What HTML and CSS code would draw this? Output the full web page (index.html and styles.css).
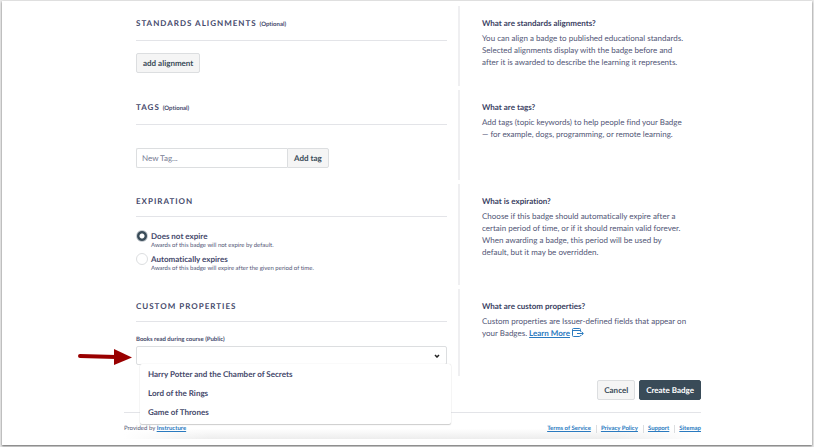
FILE: index.html
```
<!DOCTYPE html>
<html lang="en">
<head>
    <meta charset="UTF-8">
    <meta name="viewport" content="width=device-width, initial-scale=1.0">
    <title>Create Badge</title>
    <link rel="stylesheet" href="styles.css">
</head>
<body>
    <div class="window">
        <form class="page">
            <section class="row">
                <div class="fields">
                    <h2>Standards Alignments <small>(Optional)</small></h2>
                    <button type="button" class="btn">add alignment</button>
                </div>
                <aside class="help">
                    <h3>What are standards alignments?</h3>
                    <p>You can align a badge to published educational standards. Selected alignments display with the badge before and after it is awarded to describe the learning it represents.</p>
                </aside>
            </section>
            <section class="row row-tags">
                <div class="fields">
                    <h2>Tags <small>(Optional)</small></h2>
                    <div class="taginput">
                        <input type="text" placeholder="New Tag..." aria-label="New Tag">
                        <button type="button" class="btn">Add tag</button>
                    </div>
                </div>
                <aside class="help">
                    <h3>What are tags?</h3>
                    <p>Add tags (topic keywords) to help people find your Badge —&nbsp;for example, dogs, programming, or remote learning.</p>
                </aside>
            </section>
            <section class="row row-expiration">
                <div class="fields">
                    <h2>Expiration</h2>
                    <label class="radio">
                        <input type="radio" name="expires" checked>
                        <span class="radio-title">Does not expire</span>
                        <span class="radio-note">Awards of this badge will not expire by default.</span>
                    </label>
                    <label class="radio">
                        <input type="radio" name="expires">
                        <span class="radio-title">Automatically expires</span>
                        <span class="radio-note">Awards of this badge will expire after the given period of time.</span>
                    </label>
                </div>
                <aside class="help">
                    <h3>What is expiration?</h3>
                    <p>Choose if this badge should automatically expire after a certain period of time, or if it should remain valid forever. When awarding a badge, this period will be used by default, but it may be overridden.</p>
                </aside>
            </section>
            <section class="row row-custom">
                <div class="fields">
                    <h2>Custom Properties</h2>
                    <label class="field-label" for="books">Books read during course (Public)</label>
                    <div class="picker">
                        <select id="books">
                            <option></option>
                        </select>
                        <svg class="chevron" viewBox="0 0 6 4" aria-hidden="true"><path d="M1 1l2 2 2-2"/></svg>
                        <ul class="menu">
                            <li>Harry Potter and the Chamber of Secrets</li>
                            <li>Lord of the Rings</li>
                            <li>Game of Thrones</li>
                        </ul>
                        <svg class="pointer" viewBox="0 0 54 18" aria-hidden="true">
                            <path class="shaft" d="M2 8L38 9"/>
                            <path class="head" d="M36 1L54 9.500L36 17z"/>
                        </svg>
                    </div>
                </div>
                <aside class="help">
                    <h3>What are custom properties?</h3>
                    <p>Custom properties are Issuer-defined fields that appear on your Badges. <a href="#">Learn More</a>
                        <svg class="external" viewBox="0 0 12 10" aria-hidden="true">
                            <path d="M8.500 3.700V1.500Q8.500 .5 7.500 .5H1.500Q.5 .5 .5 1.500V7.500Q.5 8.500 1.500 8.500H7.500Q8.500 8.500 8.500 7.200M.5 2.500H8.500M5 5.500H11M9.500 3.700L11.400 5.500L9.500 7.300"/>
                        </svg>
                    </p>
                </aside>
            </section>
            <div class="actions">
                <button type="button" class="btn">Cancel</button>
                <button type="submit" class="btn btn-dark">Create Badge</button>
            </div>
        </form>
        <footer class="footer">
            <span>Provided by <a href="#">Instructure</a></span>
            <nav>
                <a href="#">Terms of Service</a>
                <a href="#">Privacy Policy</a>
                <a href="#">Support</a>
                <a href="#">Sitemap</a>
            </nav>
        </footer>
    </div>
</body>
</html>
```

FILE: styles.css
```
*{
    padding:0;
    margin:0;
    box-sizing:border-box;
}
body{
    background-color:#e9e9e9;
    color:#525676;
    font-family:Lato, sans-serif;
    font-size:8px;
    line-height:12px;
    text-rendering:geometricPrecision;
    font-variant-ligatures:none;
    padding:1px 2px 3px;
}
.window{
    background-color:white;
    box-shadow:0 1px 2px #666;
    padding:5px 111px 6px 122px;
}
a{
    color:#2a7abf;
    font-weight:bold;
}
button, input, select{
    font:inherit;
    font-variant-ligatures:none;
    text-rendering:inherit;
    color:inherit;
}
.row{
    display:grid;
    grid-template-columns:336fr 241fr;
    min-height:80px;
    margin-bottom:4px;
}
.row-tags{
    min-height:90px;
}
.row-expiration{
    min-height:101px;
}
.row-custom{
    min-height:87px;
}
.fields{
    border-right:2px solid #efeff1;
    padding:11px 11px 0 12px;
}
.help{
    padding:11px 14px 0 22px;
}
h2{
    font-size:8px;
    line-height:12px;
    letter-spacing:1px;
    text-transform:uppercase;
    color:#45496b;
    border-bottom:1px solid #e3e4e8;
    padding-bottom:9px;
    margin-bottom:12px;
}
h2 small{
    font-size:6px;
    letter-spacing:0;
    text-transform:none;
}
h3{
    font-size:8px;
    line-height:12px;
    color:#3b3f63;
    margin-bottom:3px;
}
.btn{
    height:20px;
    padding:0 6px;
    border:1px solid #dcdee0;
    border-radius:2px;
    background-color:#f5f5f5;
    color:#394b58;
    font-weight:bold;
}
.btn-dark{
    background-color:#394b58;
    border-color:#394b58;
    color:white;
}
.taginput{
    display:flex;
    width:62%;
    margin-top:23px;
}
.taginput input{
    flex:1;
    min-width:0;
    border:1px solid #dcdee0;
    border-right:0;
    border-radius:2px 0 0 2px;
    padding:0 5px;
}
.taginput input::placeholder{
    color:#777b93;
}
.taginput .btn{
    border-radius:0 2px 2px 0;
}
.radio{
    display:grid;
    grid-template-columns:12px 1fr;
    column-gap:3px;
    padding-top:1px;
    margin-bottom:2px;
}
.radio input{
    appearance:none;
    width:12px;
    height:12px;
    border:1px solid #dcdee0;
    border-radius:50%;
}
.radio input:checked{
    border-color:#c9ced3;
    background:radial-gradient(circle, white 2px, #394b58 3px);
}
.radio-title{
    font-weight:bold;
    color:#45496b;
}
.radio-note{
    grid-column:2;
    font-size:6px;
    line-height:8px;
}
.field-label{
    display:block;
    font-size:6px;
    line-height:8px;
    font-weight:bold;
    margin:14px 0 2px;
    color:#45496b;
}
.picker{
    position:relative;
}
.picker select{
    appearance:none;
    display:block;
    width:100%;
    height:19px;
    border:1px solid #dcdee0;
    border-radius:2px;
    background-color:white;
}
.chevron{
    position:absolute;
    right:7px;
    top:8px;
    width:6px;
    height:4px;
    fill:none;
    stroke:#222;
    stroke-width:1.5;
}
.menu{
    position:absolute;
    top:18px;
    left:4px;
    right:-4px;
    background-color:white;
    list-style:none;
    border-radius:2px;
    box-shadow:0 1px 1px #ccc, 0 0 1px #ccc;
    padding:1px 8px 2px;
    font-weight:bold;
    color:#45496b;
}
.menu li{
    line-height:19px;
}
.pointer{
    position:absolute;
    left:-58px;
    top:2px;
    width:54px;
    height:18px;
}
.shaft{
    stroke:#990000;
    stroke-width:4;
    stroke-linecap:round;
}
.head{
    fill:#990000;
}
.external{
    width:12px;
    height:10px;
    vertical-align:-2px;
    fill:none;
    stroke:#2a7abf;
    stroke-width:1;
}
.actions{
    display:flex;
    justify-content:flex-end;
    gap:4px;
}
.footer{
    display:flex;
    justify-content:space-between;
    border-top:1px solid #e3e4e8;
    margin-top:12px;
    padding:12px 0 6px;
    font-size:6px;
    line-height:8px;
    background:linear-gradient(to right, white, transparent 15%, transparent 85%, white), linear-gradient(white 60%, #ededed);
}
.footer nav{
    display:flex;
}
.footer nav a + a{
    border-left:1px solid #dcdee0;
    margin-left:5px;
    padding-left:4px;
}
```
